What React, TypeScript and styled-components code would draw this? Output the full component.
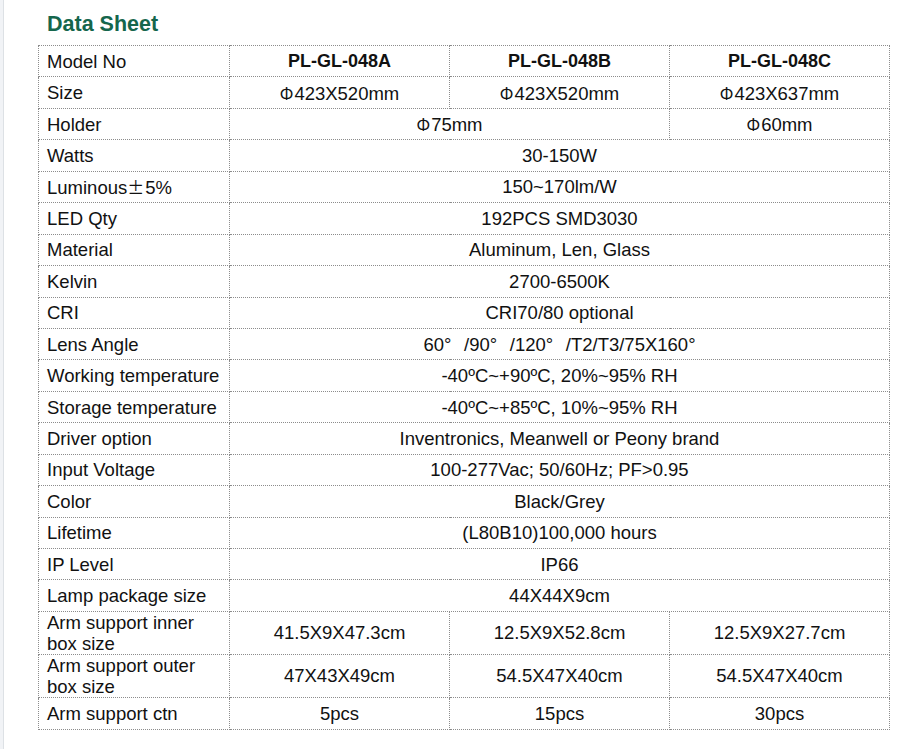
import React from "react";
import styled, { createGlobalStyle } from "styled-components";

const GlobalStyle = createGlobalStyle`
  html, body { margin: 0; padding: 0; background: #ffffff; }
  body { font-family: "Liberation Sans", Arial, sans-serif; color: #111111; }
`;

const Page = styled.div`
  display: flex;
  min-height: 749px;
`;

const Gutter = styled.div`
  width: 3px;
  flex: none;
  background: #f1f3f6;
  border-right: 1px solid #dde1e5;
`;

const Content = styled.div`
  padding: 11px 0 0 34px;
`;

const Title = styled.h1`
  margin: 0 0 8px;
  padding-left: 9px;
  font-size: 21.5px;
  line-height: 26px;
  font-weight: 700;
  color: #15664c;
`;

const Table = styled.table`
  border-collapse: collapse;
  table-layout: fixed;
  width: 851px;
  font-size: 18.5px;
  color: #111111;
`;

const Row = styled.tr<{ $h: number }>`
  height: ${(p) => p.$h}px;
`;

const Cell = styled.td<{ $bold?: boolean; $label?: boolean }>`
  border: 1px dotted #8c8c8c;
  padding: 0 ${(p) => (p.$label ? "8px" : "4px")};
  text-align: ${(p) => (p.$label ? "left" : "center")};
  vertical-align: middle;
  font-weight: ${(p) => (p.$bold ? 700 : 400)};
  font-size: ${(p) => (p.$bold ? "18px" : "18.5px")};
  line-height: 21px;
  white-space: nowrap;
`;

const WrapLabel = styled(Cell)`
  white-space: normal;
`;

const Sym = styled.span`
  font-family: "Noto Sans CJK SC", "Liberation Sans", sans-serif;
  font-size: 17px;
  margin-right: 1px;
`;

const Deg = styled.span`
  display: inline-block;
  width: 20px;
  text-align: left;
`;

type V = { text: React.ReactNode; span?: number };
type R = { label: React.ReactNode; values: V[]; bold?: boolean; h?: number; wrap?: boolean };

const phi = <Sym>Φ</Sym>;

const rows: R[] = [
  { label: "Model No", bold: true, values: [{ text: "PL-GL-048A" }, { text: "PL-GL-048B" }, { text: "PL-GL-048C" }] },
  { label: "Size", values: [{ text: <>{phi}423X520mm</> }, { text: <>{phi}423X520mm</> }, { text: <>{phi}423X637mm</> }] },
  { label: "Holder", values: [{ text: <>{phi}75mm</>, span: 2 }, { text: <>{phi}60mm</> }] },
  { label: "Watts", values: [{ text: "30-150W", span: 3 }] },
  { label: <>Luminous<Sym>±</Sym>5%</>, values: [{ text: "150~170lm/W", span: 3 }] },
  { label: "LED Qty", values: [{ text: "192PCS SMD3030", span: 3 }] },
  { label: "Material", values: [{ text: "Aluminum, Len, Glass", span: 3 }] },
  { label: "Kelvin", values: [{ text: "2700-6500K", span: 3 }] },
  { label: "CRI", values: [{ text: "CRI70/80 optional", span: 3 }] },
  {
    label: "Lens Angle",
    values: [
      {
        text: (
          <>
            60<Deg>°</Deg>/90<Deg>°</Deg>/120<Deg>°</Deg>/T2/T3/75X160°
          </>
        ),
        span: 3,
      },
    ],
  },
  { label: "Working temperature", values: [{ text: "-40ºC~+90ºC, 20%~95% RH", span: 3 }] },
  { label: "Storage temperature", values: [{ text: "-40ºC~+85ºC, 10%~95% RH", span: 3 }] },
  { label: "Driver option", values: [{ text: "Inventronics, Meanwell or Peony brand", span: 3 }] },
  { label: "Input Voltage", values: [{ text: "100-277Vac; 50/60Hz; PF>0.95", span: 3 }] },
  { label: "Color", values: [{ text: "Black/Grey", span: 3 }] },
  { label: "Lifetime", values: [{ text: "(L80B10)100,000 hours", span: 3 }] },
  { label: "IP Level", values: [{ text: "IP66", span: 3 }] },
  { label: "Lamp package size", values: [{ text: "44X44X9cm", span: 3 }] },
  {
    label: "Arm support inner box size",
    wrap: true,
    h: 43,
    values: [{ text: "41.5X9X47.3cm" }, { text: "12.5X9X52.8cm" }, { text: "12.5X9X27.7cm" }],
  },
  {
    label: "Arm support outer box size",
    wrap: true,
    h: 43,
    values: [{ text: "47X43X49cm" }, { text: "54.5X47X40cm" }, { text: "54.5X47X40cm" }],
  },
  { label: "Arm support ctn", h: 32, values: [{ text: "5pcs" }, { text: "15pcs" }, { text: "30pcs" }] },
];

export default function App() {
  return (
    <>
      <GlobalStyle />
      <Page>
        <Gutter />
        <Content>
          <Title>Data Sheet</Title>
          <Table>
            <colgroup>
              <col style={{ width: 191 }} />
              <col style={{ width: 220 }} />
              <col style={{ width: 220 }} />
              <col style={{ width: 220 }} />
            </colgroup>
            <tbody>
              {rows.map((r, i) => {
                const L = r.wrap ? WrapLabel : Cell;
                return (
                  <Row key={i} $h={r.h ?? 31.45}>
                    <L $label>{r.label}</L>
                    {r.values.map((v, j) => (
                      <Cell key={j} colSpan={v.span} $bold={r.bold}>
                        {v.text}
                      </Cell>
                    ))}
                  </Row>
                );
              })}
            </tbody>
          </Table>
        </Content>
      </Page>
    </>
  );
}
